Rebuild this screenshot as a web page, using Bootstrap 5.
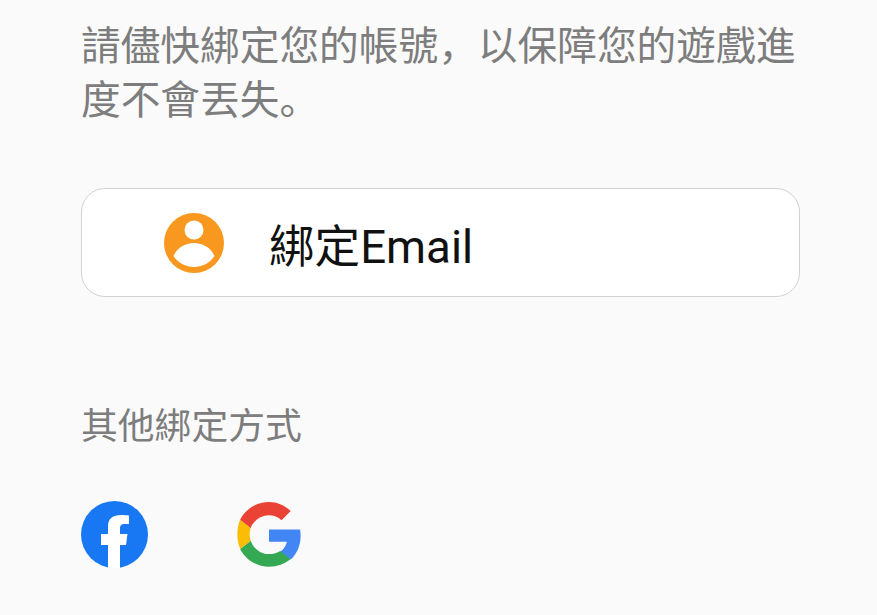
<!DOCTYPE html>
<html lang="zh-Hans">
<head>
  <meta charset="UTF-8">
  <title>綁定帳號</title>
  <link href="https://cdn.jsdelivr.net/npm/bootstrap@5.3.3/dist/css/bootstrap.min.css" rel="stylesheet">
  <style>
    body {
      background: #fafafa;
      font-family: "Noto Sans", "Noto Sans CJK SC", sans-serif;
      overflow: hidden;
    }
    .bind-page {
      width: 877px;
      height: 615px;
      padding: 18px 77px 0 81px;
    }
    .bind-intro {
      font-size: 39.7px;
      line-height: 54px;
      color: #7d7d7d;
      margin: 0 0 62px;
    }
    .bind-btn {
      width: 719px;
      height: 109px;
      background: #fff;
      border: 1px solid #d2d2d2;
      border-radius: 24px;
      padding-left: 82px;
      gap: 45px;
      color: #111;
      font-family: "Roboto", "Noto Sans CJK SC", sans-serif;
    }
    .bind-label {
      font-size: 45.6px;
      line-height: 60px;
      padding-top: 10px;
    }
    .other-title {
      font-size: 36.8px;
      line-height: 50px;
      color: #7d7d7d;
      margin: 103px 0 51px;
    }
    .social-row {
      gap: 88px;
    }
  </style>
</head>
<body>
<div class="bind-page">
  <p class="bind-intro">請儘快綁定您的帳號，以保障您的遊戲進度不會丟失。</p>

  <div class="bind-btn d-flex align-items-center">
    <svg width="60" height="60" viewBox="0 0 60 60">
      <circle cx="30" cy="30" r="30" fill="#f8981f"/>
      <circle cx="30" cy="17" r="9.500" fill="#fff"/>
      <path d="M9.500 43 C13 35 21 30 30 30 C39 30 47 35 50.500 43 C46 50 38 54 30 54 C22 54 14 50 9.500 43 Z" fill="#fff"/>
    </svg>
    <span class="bind-label">綁定Email</span>
  </div>

  <div class="other-title">其他綁定方式</div>

  <div class="social-row d-flex align-items-center">
    <!-- facebook -->
    <svg width="67" height="67" viewBox="0 0 67 67">
      <circle cx="33.500" cy="33.500" r="33.500" fill="#1877f2"/>
      <path d="M27 67 V44 H20 V33 H27 V25.500 C27 17.500 32 14 40 14 C44 14 48 14.500 48 14.500 V23 H43.500 C40 23 39 25 39 27.500 V33 H46.500 L45 44 H39 V67 Z" fill="#fff"/>
    </svg>
    <!-- google -->
    <svg width="66" height="66" viewBox="0 0 48 48">
      <path fill="#4285f4" d="M47 24.500c0-1.600-.1-3.100-.4-4.500H24v8.900h13c-.6 3-2.300 5.500-4.800 7.200l7.500 5.800C44.100 37.900 47 31.800 47 24.500z"/>
      <path fill="#34a853" d="M24 47c6.200 0 11.400-2 15.700-5.600l-7.500-5.800c-2.100 1.400-4.800 2.300-8.200 2.300-6.200 0-11.400-4.200-13.300-9.800l-7.700 6C6.800 41.700 14.800 47 24 47z"/>
      <path fill="#fbbc05" d="M10.700 28.100c-.5-1.400-.8-2.900-.8-4.600s.3-3.200.8-4.600l-7.700-6C1.700 15.900 1 19.600 1 23.500s.7 7.600 2 10.600l7.700-6z"/>
      <path fill="#ea4335" d="M24 9.600c3.500 0 6.600 1.200 9.100 3.600l6.700-6.700C35.400 2.500 30.200 0 24 0 14.800 0 6.800 5.300 3 12.900l7.700 6C12.600 13.800 17.800 9.600 24 9.600z"/>
    </svg>
  </div>
</div>
<script src="https://cdn.jsdelivr.net/npm/bootstrap@5.3.3/dist/js/bootstrap.bundle.min.js"></script>
</body>
</html>
